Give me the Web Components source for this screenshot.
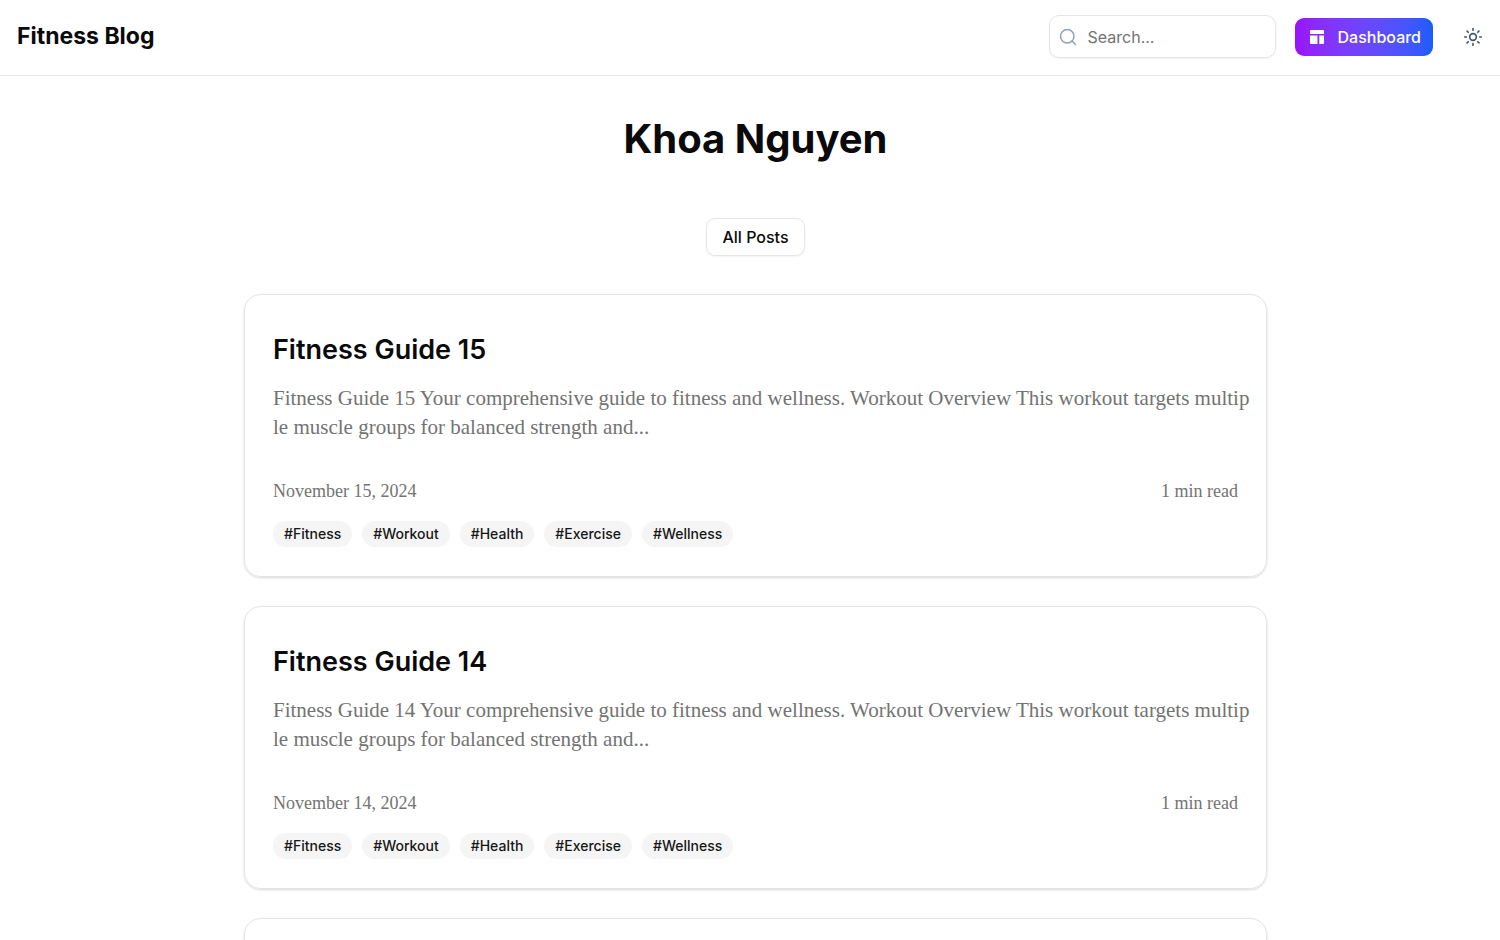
<!DOCTYPE html>
<html lang="en">
<head>
<meta charset="UTF-8">
<meta name="viewport" content="width=device-width, initial-scale=1.0">
<title>Fitness Blog</title>
<style>
  body {
    margin: 0;
    background: #fff;
    color: #0a0a0a;
    font-family: Inter, "Liberation Sans", sans-serif;
  }
  main {
    padding: 36px 0 28px 11px;
  }
  h1 {
    margin: 0 0 52px;
    text-align: center;
    font-size: 40px;
    line-height: 54px;
    font-weight: 700;
  }
</style>
</head>
<body>
<blog-header></blog-header>
<main>
  <h1>Khoa Nguyen</h1>
  <post-filter>All Posts</post-filter>
  <post-list></post-list>
</main>

<script>
class BlogHeader extends HTMLElement {
  constructor() {
    super();
    this.attachShadow({ mode: "open" });
  }
  connectedCallback() {
    this.shadowRoot.innerHTML = `
      <style>
        :host {
          display: block;
          border-bottom: 1px solid #e5e5e5;
        }
        header {
          display: flex;
          align-items: center;
          justify-content: space-between;
          padding: 15px 6px 17px 17px;
        }
        .brand {
          color: inherit;
          text-decoration: none;
          font-size: 23px;
          line-height: 29px;
          font-weight: 700;
        }
        nav {
          display: flex;
          align-items: center;
          gap: 19px;
        }
      </style>
      <header>
        <a class="brand" href="#">Fitness Blog</a>
        <nav>
          <search-box></search-box>
          <dashboard-link>Dashboard</dashboard-link>
          <theme-toggle></theme-toggle>
        </nav>
      </header>
    `;
  }
}
customElements.define("blog-header", BlogHeader);

class SearchBox extends HTMLElement {
  constructor() {
    super();
    this.attachShadow({ mode: "open" });
  }
  connectedCallback() {
    this.shadowRoot.innerHTML = `
      <style>
        :host {
          display: block;
        }
        label {
          display: flex;
          align-items: center;
          gap: 11px;
          box-sizing: border-box;
          width: 227px;
          height: 43px;
          padding: 0 9px;
          border: 1px solid #e5e5e5;
          border-radius: 10px;
          box-shadow: 0 1px 2px rgba(0, 0, 0, .05);
        }
        svg {
          flex: none;
          color: #90a1b9;
        }
        input {
          flex: 1;
          min-width: 0;
          padding: 0;
          border: 0;
          outline: 0;
          background: none;
          color: #0a0a0a;
          font: 16px/24px Inter, "Liberation Sans", sans-serif;
        }
        input::placeholder {
          color: #737373;
        }
      </style>
      <label>
        <svg width="18" height="18" viewBox="0 0 24 24" fill="none" stroke="currentColor" stroke-width="2" stroke-linecap="round" stroke-linejoin="round" aria-hidden="true">
          <circle cx="11" cy="11" r="9"/>
          <path d="m22 22-4.6-4.6"/>
        </svg>
        <input type="text" placeholder="Search..." aria-label="Search">
      </label>
    `;
  }
}
customElements.define("search-box", SearchBox);

class DashboardLink extends HTMLElement {
  constructor() {
    super();
    this.attachShadow({ mode: "open" });
  }
  connectedCallback() {
    this.shadowRoot.innerHTML = `
      <style>
        :host {
          display: block;
        }
        a {
          display: flex;
          align-items: center;
          gap: 11px;
          height: 38px;
          padding: 0 12px;
          border-radius: 9px;
          background: linear-gradient(to right in oklab, #9810fa, #155dfc);
          color: #fff;
          text-decoration: none;
          font-size: 16px;
          line-height: 24px;
          font-weight: 500;
        }
      </style>
      <a href="#dashboard">
        <svg width="20" height="20" viewBox="0 0 20 20" fill="currentColor" aria-hidden="true">
          <path d="M4 3h12a1 1 0 0 1 1 1v3H3V4a1 1 0 0 1 1-1z"/>
          <path d="M3 8.6h7.5V17H4a1 1 0 0 1-1-1z"/>
          <path d="M12.3 8.6H17V16a1 1 0 0 1-1 1h-3.7z"/>
        </svg>
        <slot></slot>
      </a>
    `;
  }
}
customElements.define("dashboard-link", DashboardLink);

class ThemeToggle extends HTMLElement {
  constructor() {
    super();
    this.attachShadow({ mode: "open" });
  }
  connectedCallback() {
    this.shadowRoot.innerHTML = `
      <style>
        :host {
          display: block;
        }
        button {
          display: flex;
          align-items: center;
          justify-content: center;
          width: 42px;
          height: 42px;
          padding: 0;
          border: 0;
          border-radius: 9px;
          background: none;
          color: #45556c;
          cursor: pointer;
        }
      </style>
      <button type="button" aria-label="Toggle theme">
        <svg width="20" height="20" viewBox="0 0 24 24" fill="none" stroke="currentColor" stroke-width="2" stroke-linecap="round" stroke-linejoin="round" aria-hidden="true">
          <circle cx="12" cy="12" r="4"/>
          <path d="M12 2v2M12 20v2M4.9 4.9l1.4 1.4M17.7 17.7l1.4 1.4M2 12h2M20 12h2M6.3 17.7l-1.4 1.4M19.1 4.9l-1.4 1.4"/>
        </svg>
      </button>
    `;
  }
}
customElements.define("theme-toggle", ThemeToggle);

class PostFilter extends HTMLElement {
  constructor() {
    super();
    this.attachShadow({ mode: "open" });
  }
  connectedCallback() {
    this.shadowRoot.innerHTML = `
      <style>
        :host {
          display: flex;
          justify-content: center;
          margin-bottom: 38px;
        }
        button {
          height: 38px;
          padding: 0 15px;
          border: 1px solid #e5e5e5;
          border-radius: 9px;
          background: #fff;
          color: #0a0a0a;
          font: 500 16px/24px Inter, "Liberation Sans", sans-serif;
          box-shadow: 0 1px 2px rgba(0, 0, 0, .05);
          cursor: pointer;
        }
      </style>
      <button type="button"><slot></slot></button>
    `;
  }
}
customElements.define("post-filter", PostFilter);

class TagPill extends HTMLElement {
  constructor() {
    super();
    this.attachShadow({ mode: "open" });
  }
  connectedCallback() {
    this.shadowRoot.innerHTML = `
      <style>
        :host {
          display: block;
          padding: 3px 11px;
          border-radius: 13px;
          background: #f5f5f5;
          color: #171717;
          font: 500 14px/20px Inter, "Liberation Sans", sans-serif;
        }
      </style>
      <slot></slot>
    `;
  }
}
customElements.define("tag-pill", TagPill);

class PostCard extends HTMLElement {
  constructor() {
    super();
    this.attachShadow({ mode: "open" });
  }
  connectedCallback() {
    const tags = this.getAttribute("tags").split(" ");
    this.shadowRoot.innerHTML = `
      <style>
        :host {
          display: block;
        }
        article {
          padding: 36px 28px 29px;
          border: 1px solid #e5e5e5;
          border-radius: 17px;
          box-shadow: 0 1px 3px rgba(0, 0, 0, .1), 0 1px 2px rgba(0, 0, 0, .06);
        }
        h2 {
          margin: 0 0 15px;
          font-size: 27px;
          line-height: 38px;
          font-weight: 600;
        }
        h2 a {
          color: inherit;
          text-decoration: none;
        }
        p, .meta {
          color: #737373;
          font-family: Georgia, "Liberation Serif", serif;
        }
        /* the excerpt may run halfway into the card's padding */
        p {
          margin: 0 -14px 37px 0;
          font-size: 21px;
          line-height: 29px;
          word-break: break-all;
        }
        .meta {
          display: flex;
          justify-content: space-between;
          margin-bottom: 18px;
          font-size: 18px;
          line-height: 24px;
        }
        .tags {
          display: flex;
          flex-wrap: wrap;
          gap: 10px;
        }
      </style>
      <article>
        <h2><a href="#post">${this.getAttribute("heading")}</a></h2>
        <p><slot></slot></p>
        <div class="meta">
          <time>${this.getAttribute("date")}</time>
          <span>${this.getAttribute("reading")}</span>
        </div>
        <div class="tags">${tags.map(tag => `<tag-pill>#${tag}</tag-pill>`).join("")}</div>
      </article>
    `;
  }
}
customElements.define("post-card", PostCard);

class PostList extends HTMLElement {
  constructor() {
    super();
    this.attachShadow({ mode: "open" });
  }
  getCards() {
    return [15, 14, 13].map(day => `
      <post-card heading="Fitness Guide ${day}" date="November ${day}, 2024" reading="1 min read" tags="Fitness Workout Health Exercise Wellness">Fitness Guide ${day} Your comprehensive guide to fitness and wellness. Workout Overview This workout targets multiple muscle groups for balanced strength and...</post-card>
    `).join("");
  }
  connectedCallback() {
    this.shadowRoot.innerHTML = `
      <style>
        :host {
          display: flex;
          flex-direction: column;
          gap: 29px;
          max-width: 1023px;
          margin: 0 auto;
        }
      </style>
      ${this.getCards()}
    `;
  }
}
customElements.define("post-list", PostList);
</script>
</body>
</html>
